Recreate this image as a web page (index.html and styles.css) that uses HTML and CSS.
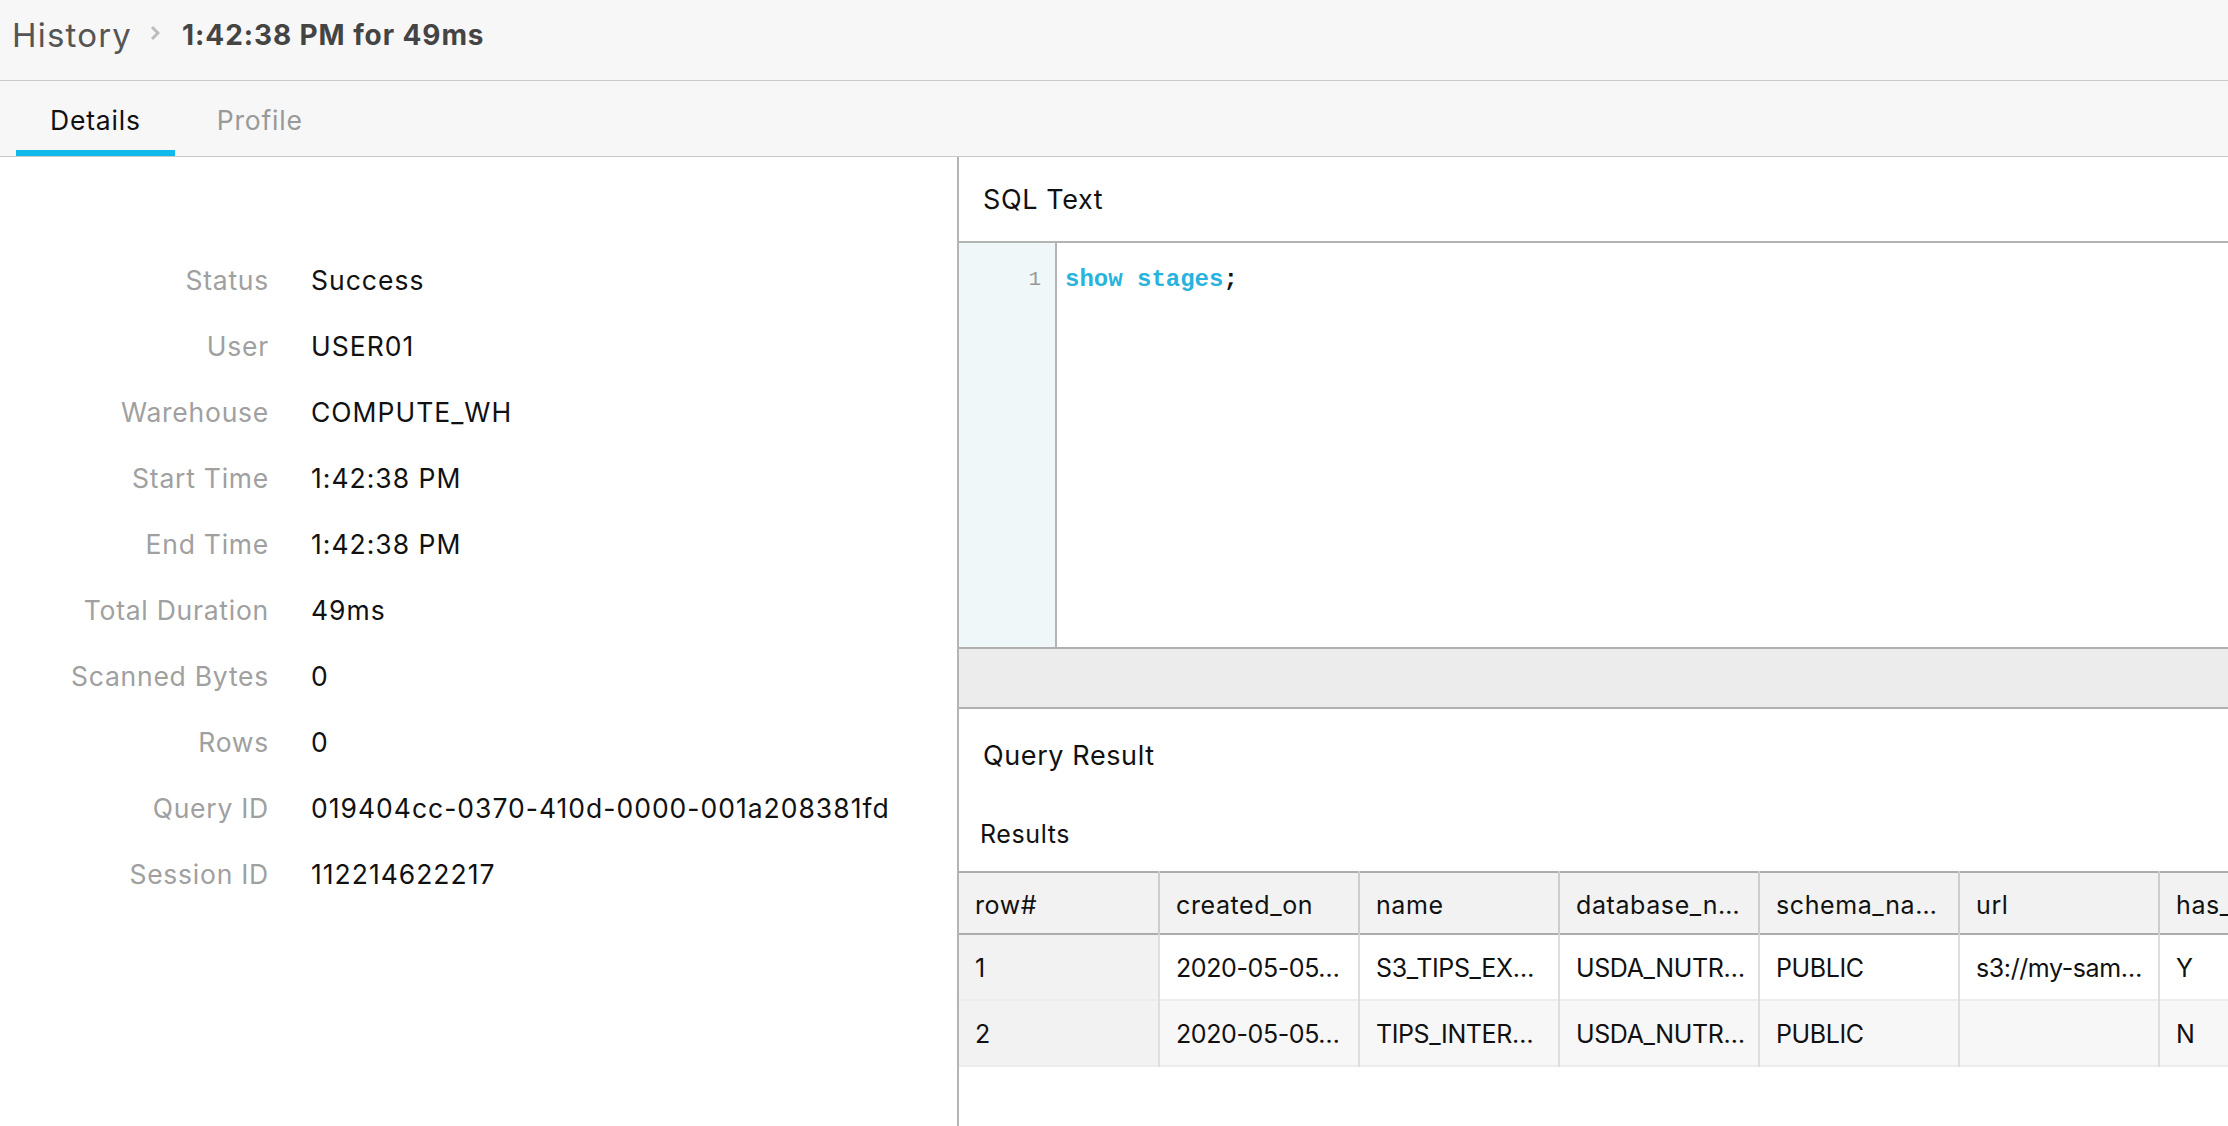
FILE: index.html
```html
<!DOCTYPE html>
<html>
<head>
<meta charset="utf-8">
<link rel="stylesheet" href="styles.css">
</head>
<body>
<header class="topbar">
  <span class="crumb">History</span>
  <svg class="chev" width="10" height="16" viewBox="0 0 10 16"><path d="M2 2 L8 8 L2 14" fill="none" stroke="#bdbdbd" stroke-width="3"/></svg>
  <span class="title">1:42:38 PM for 49ms</span>
</header>
<nav class="tabs">
  <div class="tab active">Details</div>
  <div class="tab">Profile</div>
</nav>
<main class="main">
  <section class="left">
    <div class="details">
      <div class="lbl">Status</div><div class="val">Success</div>
      <div class="lbl">User</div><div class="val">USER01</div>
      <div class="lbl">Warehouse</div><div class="val">COMPUTE_WH</div>
      <div class="lbl">Start Time</div><div class="val">1:42:38 PM</div>
      <div class="lbl">End Time</div><div class="val">1:42:38 PM</div>
      <div class="lbl">Total Duration</div><div class="val">49ms</div>
      <div class="lbl">Scanned Bytes</div><div class="val">0</div>
      <div class="lbl">Rows</div><div class="val">0</div>
      <div class="lbl">Query ID</div><div class="val">019404cc-0370-410d-0000-001a208381fd</div>
      <div class="lbl">Session ID</div><div class="val">112214622217</div>
    </div>
  </section>
  <section class="right">
    <div class="sql-head">SQL Text</div>
    <div class="editor">
      <div class="gutter"><div class="ln">1</div></div>
      <div class="code"><span class="kw">show stages</span>;</div>
    </div>
    <div class="graybar"></div>
    <div class="qr-title">Query Result</div>
    <div class="results-lbl">Results</div>
    <div class="table-wrap">
      <table class="grid">
        <thead>
          <tr><th>row#</th><th>created_on</th><th>name</th><th>database_n…</th><th>schema_na…</th><th>url</th><th>has_credentials</th></tr>
        </thead>
        <tbody>
          <tr><td class="rn">1</td><td>2020-05-05…</td><td>S3_TIPS_EX…</td><td>USDA_NUTR…</td><td>PUBLIC</td><td>s3://my-sam…</td><td>Y</td></tr>
          <tr class="alt"><td class="rn">2</td><td>2020-05-05…</td><td>TIPS_INTER…</td><td>USDA_NUTR…</td><td>PUBLIC</td><td></td><td>N</td></tr>
        </tbody>
      </table>
    </div>
  </section>
</main>
</body>
</html>
```
FILE: styles.css
```css
* { box-sizing: border-box; }
html, body { margin: 0; padding: 0; }
body {
  width: 2228px;
  height: 1126px;
  overflow: hidden;
  font-family: Inter, "Noto Sans", sans-serif;
  color: #111;
  background: #fff;
}
.topbar {
  height: 81px;
  background: #f7f7f7;
  border-bottom: 1px solid #cacaca;
  display: flex;
  align-items: center;
  padding: 0 0 10px 12px;
}
.crumb {
  font-size: 33px;
  color: #555;
  letter-spacing: 1.2px;
}
.chev { margin: 0 22px 4px 18px; }
.title {
  font-size: 28px;
  font-weight: 700;
  color: #444;
  letter-spacing: 0.9px;
}
.tabs {
  height: 76px;
  background: #f7f7f7;
  border-bottom: 1px solid #cacaca;
  display: flex;
  padding-left: 16px;
  gap: 8px;
}
.tab {
  font-size: 26.5px;
  letter-spacing: 0.8px;
  color: #999;
  padding: 8px 34px 0;
  display: flex;
  align-items: center;
  border-bottom: 6px solid transparent;
}
.tab.active {
  color: #111;
  border-bottom-color: #10b9ec;
}
.main {
  display: flex;
  height: 969px;
}
.left {
  width: 957px;
  flex: none;
  padding-top: 90px;
}
.details {
  display: grid;
  grid-template-columns: 269px auto;
  column-gap: 42px;
  grid-auto-rows: 66px;
  align-items: center;
  font-size: 26.5px;
}
.lbl { text-align: right; color: #a0a0a0; letter-spacing: 0.75px; }
.val { color: #111; letter-spacing: 1px; }
.right {
  flex: 1;
  min-width: 0;
  border-left: 2px solid #b4b4b4;
  overflow: hidden;
}
.sql-head {
  height: 86px;
  border-bottom: 2px solid #b4b4b4;
  display: flex;
  align-items: center;
  padding-left: 24px;
  font-size: 27px;
  letter-spacing: 0.6px;
  color: #111;
}
.editor {
  display: flex;
  height: 404px;
}
.gutter {
  width: 98px;
  background: #eff7f9;
  border-right: 2px solid #b4b4b4;
  padding: 21px 14px 0 0;
  text-align: right;
}
.ln {
  font-family: "Liberation Mono", monospace;
  font-size: 21px;
  color: #999;
  line-height: 32px;
}
.code {
  padding: 21px 0 0 8px;
  font-family: "Liberation Mono", monospace;
  font-size: 24px;
  font-weight: 700;
  line-height: 32px;
  color: #111;
}
.kw { color: #27b3de; }
.graybar {
  height: 62px;
  background: #ececec;
  border-top: 2px solid #b0b0b0;
  border-bottom: 2px solid #b0b0b0;
}
.qr-title {
  height: 92px;
  display: flex;
  align-items: center;
  padding-left: 24px;
  font-size: 27px;
  letter-spacing: 0.6px;
}
.results-lbl {
  height: 70px;
  padding: 18px 0 0 21px;
  font-size: 25px;
  letter-spacing: 0.6px;
  line-height: 30px;
}
.table-wrap {
  overflow: hidden;
  width: 100%;
}
.grid {
  border-collapse: collapse;
  table-layout: fixed;
  width: 1400px;
  font-size: 25px;
  color: #111;
}
.grid th, .grid td {
  width: 200px;
  text-align: left;
  font-weight: 400;
  padding: 0 0 0 16px;
  white-space: nowrap;
  overflow: hidden;
  text-overflow: ellipsis;
}
.grid th { letter-spacing: 0.6px; }
.grid td { letter-spacing: -0.4px; }
.grid thead tr {
  height: 62px;
  background: #f2f2f2;
  border-top: 2px solid #adadad;
  border-bottom: 2px solid #adadad;
}
.grid th { border-right: 2px solid #cdcdcd; padding-top: 3px; }
.grid tbody tr {
  height: 66px;
  border-bottom: 2px solid #ececec;
}
.grid td { border-right: 2px solid #dedede; background: #fff; padding-top: 2px; }
.grid tr.alt td { background: #f7f7f7; }
.grid td.rn, .grid tr.alt td.rn { background: #f2f2f2; }
```
